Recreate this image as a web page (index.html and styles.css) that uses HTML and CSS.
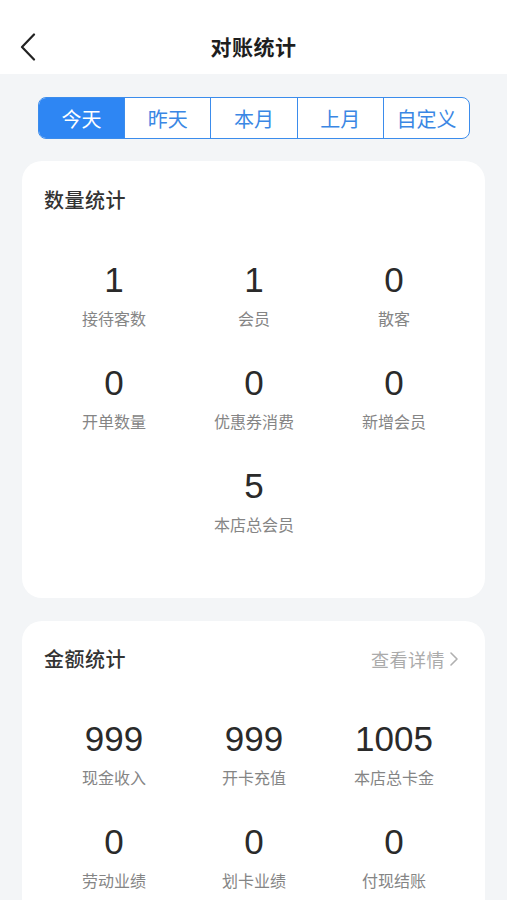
FILE: index.html
```html
<!DOCTYPE html>
<html lang="zh">
<head>
<meta charset="utf-8">
<link rel="stylesheet" href="styles.css">
</head>
<body>
<header class="nav">
  <span class="back">
    <svg width="16" height="28" viewBox="0 0 16 28"><path d="M14 1.5 L2 14 L14 26.5" fill="none" stroke="#222" stroke-width="2.2" stroke-linecap="round" stroke-linejoin="round"/></svg>
  </span>
  <h1 class="nav-title">对账统计</h1>
</header>
<main class="page">
  <div class="tabs">
    <div class="tab active">今天</div>
    <div class="tab">昨天</div>
    <div class="tab">本月</div>
    <div class="tab">上月</div>
    <div class="tab">自定义</div>
  </div>

  <section class="card card-count">
    <div class="card-head">
      <h2 class="card-title">数量统计</h2>
    </div>
    <div class="grid">
      <div class="item"><div class="num">1</div><div class="label">接待客数</div></div>
      <div class="item"><div class="num">1</div><div class="label">会员</div></div>
      <div class="item"><div class="num">0</div><div class="label">散客</div></div>
      <div class="item"><div class="num">0</div><div class="label">开单数量</div></div>
      <div class="item"><div class="num">0</div><div class="label">优惠券消费</div></div>
      <div class="item"><div class="num">0</div><div class="label">新增会员</div></div>
      <div class="item"></div>
      <div class="item"><div class="num">5</div><div class="label">本店总会员</div></div>
    </div>
  </section>

  <section class="card card-money">
    <div class="card-head">
      <h2 class="card-title">金额统计</h2>
      <span class="more">查看详情
        <svg width="10" height="16" viewBox="0 0 10 16"><path d="M2 2 L8 8 L2 14" fill="none" stroke="#b0b0b0" stroke-width="1.6" stroke-linecap="round" stroke-linejoin="round"/></svg>
      </span>
    </div>
    <div class="grid">
      <div class="item"><div class="num">999</div><div class="label">现金收入</div></div>
      <div class="item"><div class="num">999</div><div class="label">开卡充值</div></div>
      <div class="item"><div class="num">1005</div><div class="label">本店总卡金</div></div>
      <div class="item"><div class="num">0</div><div class="label">劳动业绩</div></div>
      <div class="item"><div class="num">0</div><div class="label">划卡业绩</div></div>
      <div class="item"><div class="num">0</div><div class="label">付现结账</div></div>
    </div>
  </section>
</main>
</body>
</html>
```
FILE: styles.css
```css
* { box-sizing: border-box; margin: 0; padding: 0; }
html, body {
  width: 507px;
  height: 900px;
  overflow: hidden;
}
body {
  background: #f3f5f7;
  font-family: "Noto Sans CJK SC", "Noto Sans", sans-serif;
  color: #222;
}
.nav {
  height: 74px;
  background: #fff;
  display: flex;
  align-items: center;
  justify-content: center;
  position: relative;
  padding-top: 18px;
}
.back {
  position: absolute;
  left: 20px;
  top: 33px;
  display: block;
  width: 16px;
  height: 28px;
}
.back svg { display: block; }
.nav-title {
  font-size: 21px;
  font-weight: 700;
  color: #1e1e1e;
  line-height: 28px;
  letter-spacing: 0.5px;
}
.page {
  padding: 23px 22px 0 22px;
}
.tabs {
  margin: 0 15px 0 16px;
  display: flex;
  height: 42px;
  border: 1.5px solid #3b8cec;
  border-radius: 8px;
  overflow: hidden;
  background: #fff;
}
.tab {
  flex: 1;
  display: flex;
  align-items: center;
  justify-content: center;
  font-size: 20px;
  color: #3a87e4;
  border-left: 1.5px solid #3b8cec;
}
.tab:first-child { border-left: none; }
.tab.active {
  background: #2e86f3;
  color: #fff;
}
.card {
  background: #fff;
  border-radius: 20px;
  margin-top: 22px;
  padding: 24px 21px 62px 22px;
}
.card-money {
  margin-top: 23px;
  padding-top: 23px;
}
.card-head {
  display: flex;
  align-items: center;
  justify-content: space-between;
  height: 30px;
}
.card-title {
  font-size: 20px;
  font-weight: 500;
  color: #333;
  line-height: 30px;
  letter-spacing: 0.5px;
}
.more {
  display: flex;
  align-items: center;
  gap: 4px;
  font-size: 18px;
  color: #ababab;
  margin-right: 5px;
  letter-spacing: 0.5px;
}
.more svg { display: block; }
.grid {
  margin-top: 45px;
  display: grid;
  grid-template-columns: repeat(3, 140px);
  row-gap: 33px;
}
.item {
  display: flex;
  flex-direction: column;
  align-items: center;
}
.num {
  font-family: "Liberation Sans", Arial, sans-serif;
  font-size: 35px;
  line-height: 40px;
  color: #2a2a2a;
}
.label {
  margin-top: 6px;
  font-size: 16px;
  line-height: 24px;
  color: #858585;
}
```
